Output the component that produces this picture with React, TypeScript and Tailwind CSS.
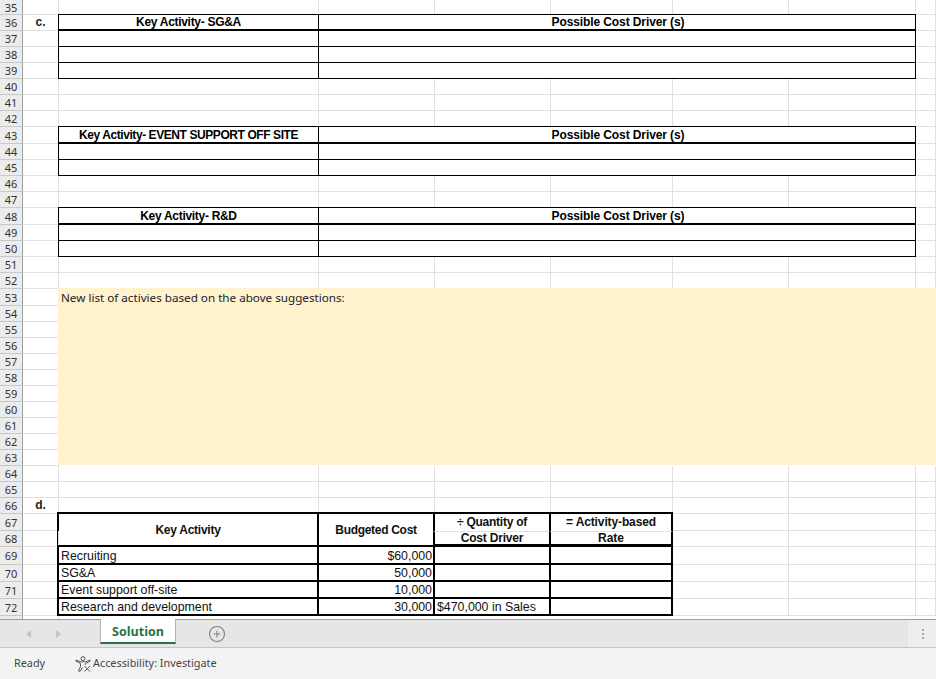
import { CirclePlus } from "lucide-react";

type Cell = { text?: string; cls: string };

const gridCell = "border-r border-b border-[#e1e1e1]";
// thin black box used by the activity tables, sits on top of the gridlines
const box = "-mt-px -ml-px border border-black bg-white flex items-center justify-center font-bold text-[12px] text-black";
const boxHead = "-mt-px -ml-px border border-black border-b-2 bg-white flex items-center justify-center font-bold text-[12px] text-black";
const thick = "-mt-0.5 -ml-0.5 border-2 border-black bg-white flex items-center text-[12.35px] text-[#111] leading-none";
const headTop = "-mt-0.5 -ml-0.5 border-2 border-b-0 border-black flex items-center justify-center pb-px text-[12px] font-bold text-[#111]";
const headBottom = "-ml-0.5 border-x-2 border-b-[3px] border-t border-black border-t-[#e1e1e1] flex items-center justify-center text-[12px] font-bold text-[#111]";

const activityTable = (title: string, rows: number, titleCls = "tracking-[-0.3px]"): Cell[][] => {
  const out: Cell[][] = [
    [
      { text: title, cls: boxHead + " " + titleCls },
      { text: "Possible Cost Driver (s)", cls: boxHead + " col-span-5 pl-[2px] tracking-[-0.1px]" },
      { cls: gridCell },
    ],
  ];
  for (let i = 0; i < rows; i++) {
    out.push([{ cls: box }, { cls: box + " col-span-5" }, { cls: gridCell }]);
  }
  return out;
};

const blank = (): Cell[] => [
  { cls: gridCell },
  { cls: gridCell },
  { cls: gridCell },
  { cls: gridCell },
  { cls: gridCell },
  { cls: gridCell },
  { cls: gridCell },
];

const budgetRow = (name: string, cost: string, driver?: string): Cell[] => [
  { text: name, cls: thick + " pl-[2px] pt-[2px]" },
  { text: cost, cls: thick + " justify-end pr-[1px] pt-[2px]" },
  { text: driver, cls: thick + " pl-[2px] pt-[2px]" },
  { cls: thick },
  { cls: gridCell },
  { cls: gridCell },
  { cls: gridCell },
];

type Row = { label: number; a?: string; cells: Cell[] };

const table36 = activityTable("Key Activity- SG&A", 3);
const table43 = activityTable("Key Activity- EVENT SUPPORT OFF SITE", 2, "tracking-[-0.42px]");
const table48 = activityTable("Key Activity- R&D", 2);

const rows: Row[] = [
  { label: 35, cells: blank() },
  { label: 36, a: "c.", cells: table36[0] },
  { label: 37, cells: table36[1] },
  { label: 38, cells: table36[2] },
  { label: 39, cells: table36[3] },
  { label: 40, cells: blank() },
  { label: 41, cells: blank() },
  { label: 42, cells: blank() },
  { label: 43, cells: table43[0] },
  { label: 44, cells: table43[1] },
  { label: 45, cells: table43[2] },
  { label: 46, cells: blank() },
  { label: 47, cells: blank() },
  { label: 48, cells: table48[0] },
  { label: 49, cells: table48[1] },
  { label: 50, cells: table48[2] },
  { label: 51, cells: blank() },
  { label: 52, cells: blank() },
  {
    label: 53,
    cells: [
      {
        text: "New list of activies based on the above suggestions:",
        cls: "relative z-10 -mt-px -ml-px mb-px col-span-7 row-span-11 bg-[#fff2cc] pl-[3px] pt-[2px] font-['Noto_Sans',sans-serif] text-[11.66px] leading-[16px] text-[#1c1c2c]",
      },
    ],
  },
  ...[54, 55, 56, 57, 58, 59, 60, 61, 62, 63].map((n) => ({ label: n, cells: [] as Cell[] })),
  { label: 64, cells: blank() },
  { label: 65, cells: blank() },
  { label: 66, a: "d.", cells: blank() },
  {
    label: 67,
    cells: [
      { text: "Key Activity", cls: thick + " row-span-2 justify-center font-bold !text-[12px] tracking-[-0.25px]" },
      { text: "Budgeted Cost", cls: thick + " row-span-2 justify-center font-bold !text-[12px] tracking-[-0.3px]" },
      { text: "÷ Quantity of", cls: headTop + " tracking-[-0.25px]" },
      { text: "= Activity-based", cls: headTop + " tracking-[-0.12px]" },
      { cls: gridCell },
      { cls: gridCell },
      { cls: gridCell },
    ],
  },
  {
    label: 68,
    cells: [
      { text: "Cost Driver", cls: headBottom + " tracking-[-0.18px]" },
      { text: "Rate", cls: headBottom },
      { cls: gridCell },
      { cls: gridCell },
      { cls: gridCell },
    ],
  },
  { label: 69, cells: budgetRow("Recruiting", "$60,000") },
  { label: 70, cells: budgetRow("SG&A", "50,000") },
  { label: 71, cells: budgetRow("Event support off-site", "10,000") },
  { label: 72, cells: budgetRow("Research and development", "30,000", "$470,000 in Sales") },
];

function AccessibilityIcon() {
  return (
    <svg width="17" height="16" viewBox="0 0 17 16" fill="none" stroke="#555" strokeWidth="1">
      <circle cx="8" cy="2.6" r="2" />
      <path d="M1 4 L5.5 5.8 L10.5 5.8 L15 4 L15 5.2 L10.5 7.5 L10 9" />
      <path d="M1 4 L1 5.2 L5.5 7.5 L5.5 10.5 L3.5 15 L5 15.5 L7.5 11.5" />
      <path d="M9.5 10 L15 15.5 M15 10 L9.5 15.5" />
    </svg>
  );
}

export default function App() {
  return (
    <div className="flex h-[679px] w-[936px] flex-col overflow-hidden bg-white font-['Liberation_Sans',Arial,sans-serif]">
      <div className="grid h-[619px] shrink-0 grid-cols-[23px_36px_260px_116px_116px_122px_116px_127px_20px] grid-rows-[15px_16px_16px_16px_16px_16px_16px_16px_17px_16px_16px_16px_16px_17px_16px_16px_16px_16px_17px_16px_16px_16px_16px_16px_16px_16px_16px_16px_16px_16px_16px_16px_17px_16px_18px_17px_17px_17px_3px]">
        {rows.map((row) => (
          <div key={row.label} className="contents">
            <div className="flex items-center justify-center border-r border-b border-r-[#9f9f9f] border-b-[#c8c8c8] bg-[#ececec] font-['Noto_Sans',sans-serif] text-[11px] leading-none text-[#333]">
              {row.label}
            </div>
            <div className={gridCell + " flex items-center justify-center pb-px text-[12px] font-bold text-[#222]"}>
              {row.a}
            </div>
            {row.cells.map((cell, i) => (
              <div key={i} className={cell.cls}>
                {cell.text}
              </div>
            ))}
          </div>
        ))}
        <div className="border-r border-r-[#9f9f9f] bg-[#ececec]" />
        <div className="border-r border-[#e1e1e1]" />
        <div className="col-span-7" />
      </div>

      <div className="flex h-[28px] shrink-0 items-stretch border-t border-[#9e9e9e] bg-[#e6e6e6]">
        <div className="flex w-[100px] items-center pl-[26px]">
          <span className="h-0 w-0 border-y-[4px] border-r-[5px] border-y-transparent border-r-[#c4c4c4]" />
          <span className="ml-[25px] h-0 w-0 border-y-[4px] border-l-[5px] border-y-transparent border-l-[#c4c4c4]" />
        </div>
        <div className="-mt-px flex h-[25px] w-[76px] items-center justify-center border-x border-b-2 border-x-[#b5b5b5] border-b-[#217346] bg-white pt-[4px] font-['Open_Sans',sans-serif] text-[12.5px] font-bold text-[#217346]">
          Solution
        </div>
        <div className="flex items-center pl-[32px]">
          <CirclePlus size={18} strokeWidth={1.5} className="text-[#808080]" />
        </div>
        <div className="ml-auto flex w-[28px] flex-col items-center justify-center gap-[2px] bg-[#eeeeee] pl-[1px]">
          <span className="h-[2px] w-[2px] bg-[#a8a8a8]" />
          <span className="h-[2px] w-[2px] bg-[#a8a8a8]" />
          <span className="h-[2px] w-[2px] bg-[#a8a8a8]" />
        </div>
      </div>

      <div className="flex flex-1 items-center border-t border-[#c6c6c6] bg-[#f3f3f3] font-['Noto_Sans',sans-serif] text-[10.85px] text-[#444]">
        <span className="ml-[14px] w-[61px]">Ready</span>
        <AccessibilityIcon />
        <span className="ml-[1px]">Accessibility: Investigate</span>
      </div>
    </div>
  );
}
